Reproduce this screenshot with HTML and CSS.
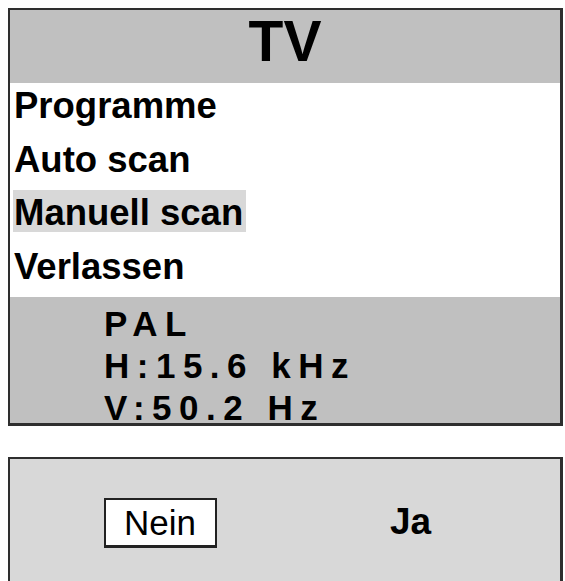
FILE: index.html
```html
<!DOCTYPE html>
<html>
<head>
<meta charset="utf-8">
<link rel="stylesheet" href="styles.css">
</head>
<body>
<div class="screen">
  <div class="panel">
    <div class="header">TV</div>
    <div class="menu">
      <div class="item"><span class="label">Programme</span></div>
      <div class="item"><span class="label">Auto scan</span></div>
      <div class="item"><span class="label selected">Manuell scan</span></div>
      <div class="item"><span class="label">Verlassen</span></div>
    </div>
    <div class="info">
      <div class="line">PAL</div>
      <div class="line">H:15.6 kHz</div>
      <div class="line">V:50.2 Hz</div>
    </div>
  </div>
  <div class="dialog">
    <div class="btn focused">Nein</div>
    <div class="btn yes">Ja</div>
  </div>
</div>
</body>
</html>
```
FILE: styles.css
```css
html, body {
  margin: 0;
  padding: 0;
  background: #ffffff;
}
body {
  font-family: "Liberation Sans", Arial, sans-serif;
  color: #000;
}
.screen {
  padding: 8px 2px 0 8px;
  height: 581px;
  box-sizing: border-box;
  overflow: hidden;
}
.panel {
  width: 555px;
  box-sizing: border-box;
  border: 2px solid #2e2e2e;
  border-right-width: 3px;
  border-bottom-width: 3px;
}
.header {
  height: 73px;
  background: #c0c0c0;
  font-weight: bold;
  font-size: 57px;
  line-height: 62px;
  text-align: center;
}
.menu {
  background: #fff;
  height: 214px;
  box-sizing: border-box;
  padding: 0 0 0 3px;
}
.item {
  height: 53.5px;
}
.label {
  display: inline-block;
  box-sizing: border-box;
  width: 233px;
  height: 42px;
  line-height: 46px;
  padding-left: 1px;
  font-weight: bold;
  font-size: 36.5px;
  white-space: nowrap;
}
.label.selected {
  background: #d8d8d8;
}
.info {
  background: #c0c0c0;
  height: 126px;
  box-sizing: border-box;
  padding: 6px 0 0 94px;
}
.line {
  font-weight: bold;
  font-size: 35px;
  letter-spacing: 7.5px;
  line-height: 42px;
}
.dialog {
  margin-top: 31px;
  width: 555px;
  height: 140px;
  box-sizing: border-box;
  border: 2px solid #2e2e2e;
  border-right-width: 3px;
  background: #d8d8d8;
  display: flex;
  align-items: flex-start;
  padding: 39px 0 0 94px;
}
.btn {
  font-size: 35px;
  line-height: 44px;
  padding-top: 2px;
}
.btn.yes {
  font-weight: bold;
  font-size: 37px;
  margin-left: 173px;
}
.btn.focused {
  background: #fff;
  border: 2px solid #222;
  border-bottom-width: 3px;
  padding: 1px 18px 0 18px;
  width: 73px;
}
```
